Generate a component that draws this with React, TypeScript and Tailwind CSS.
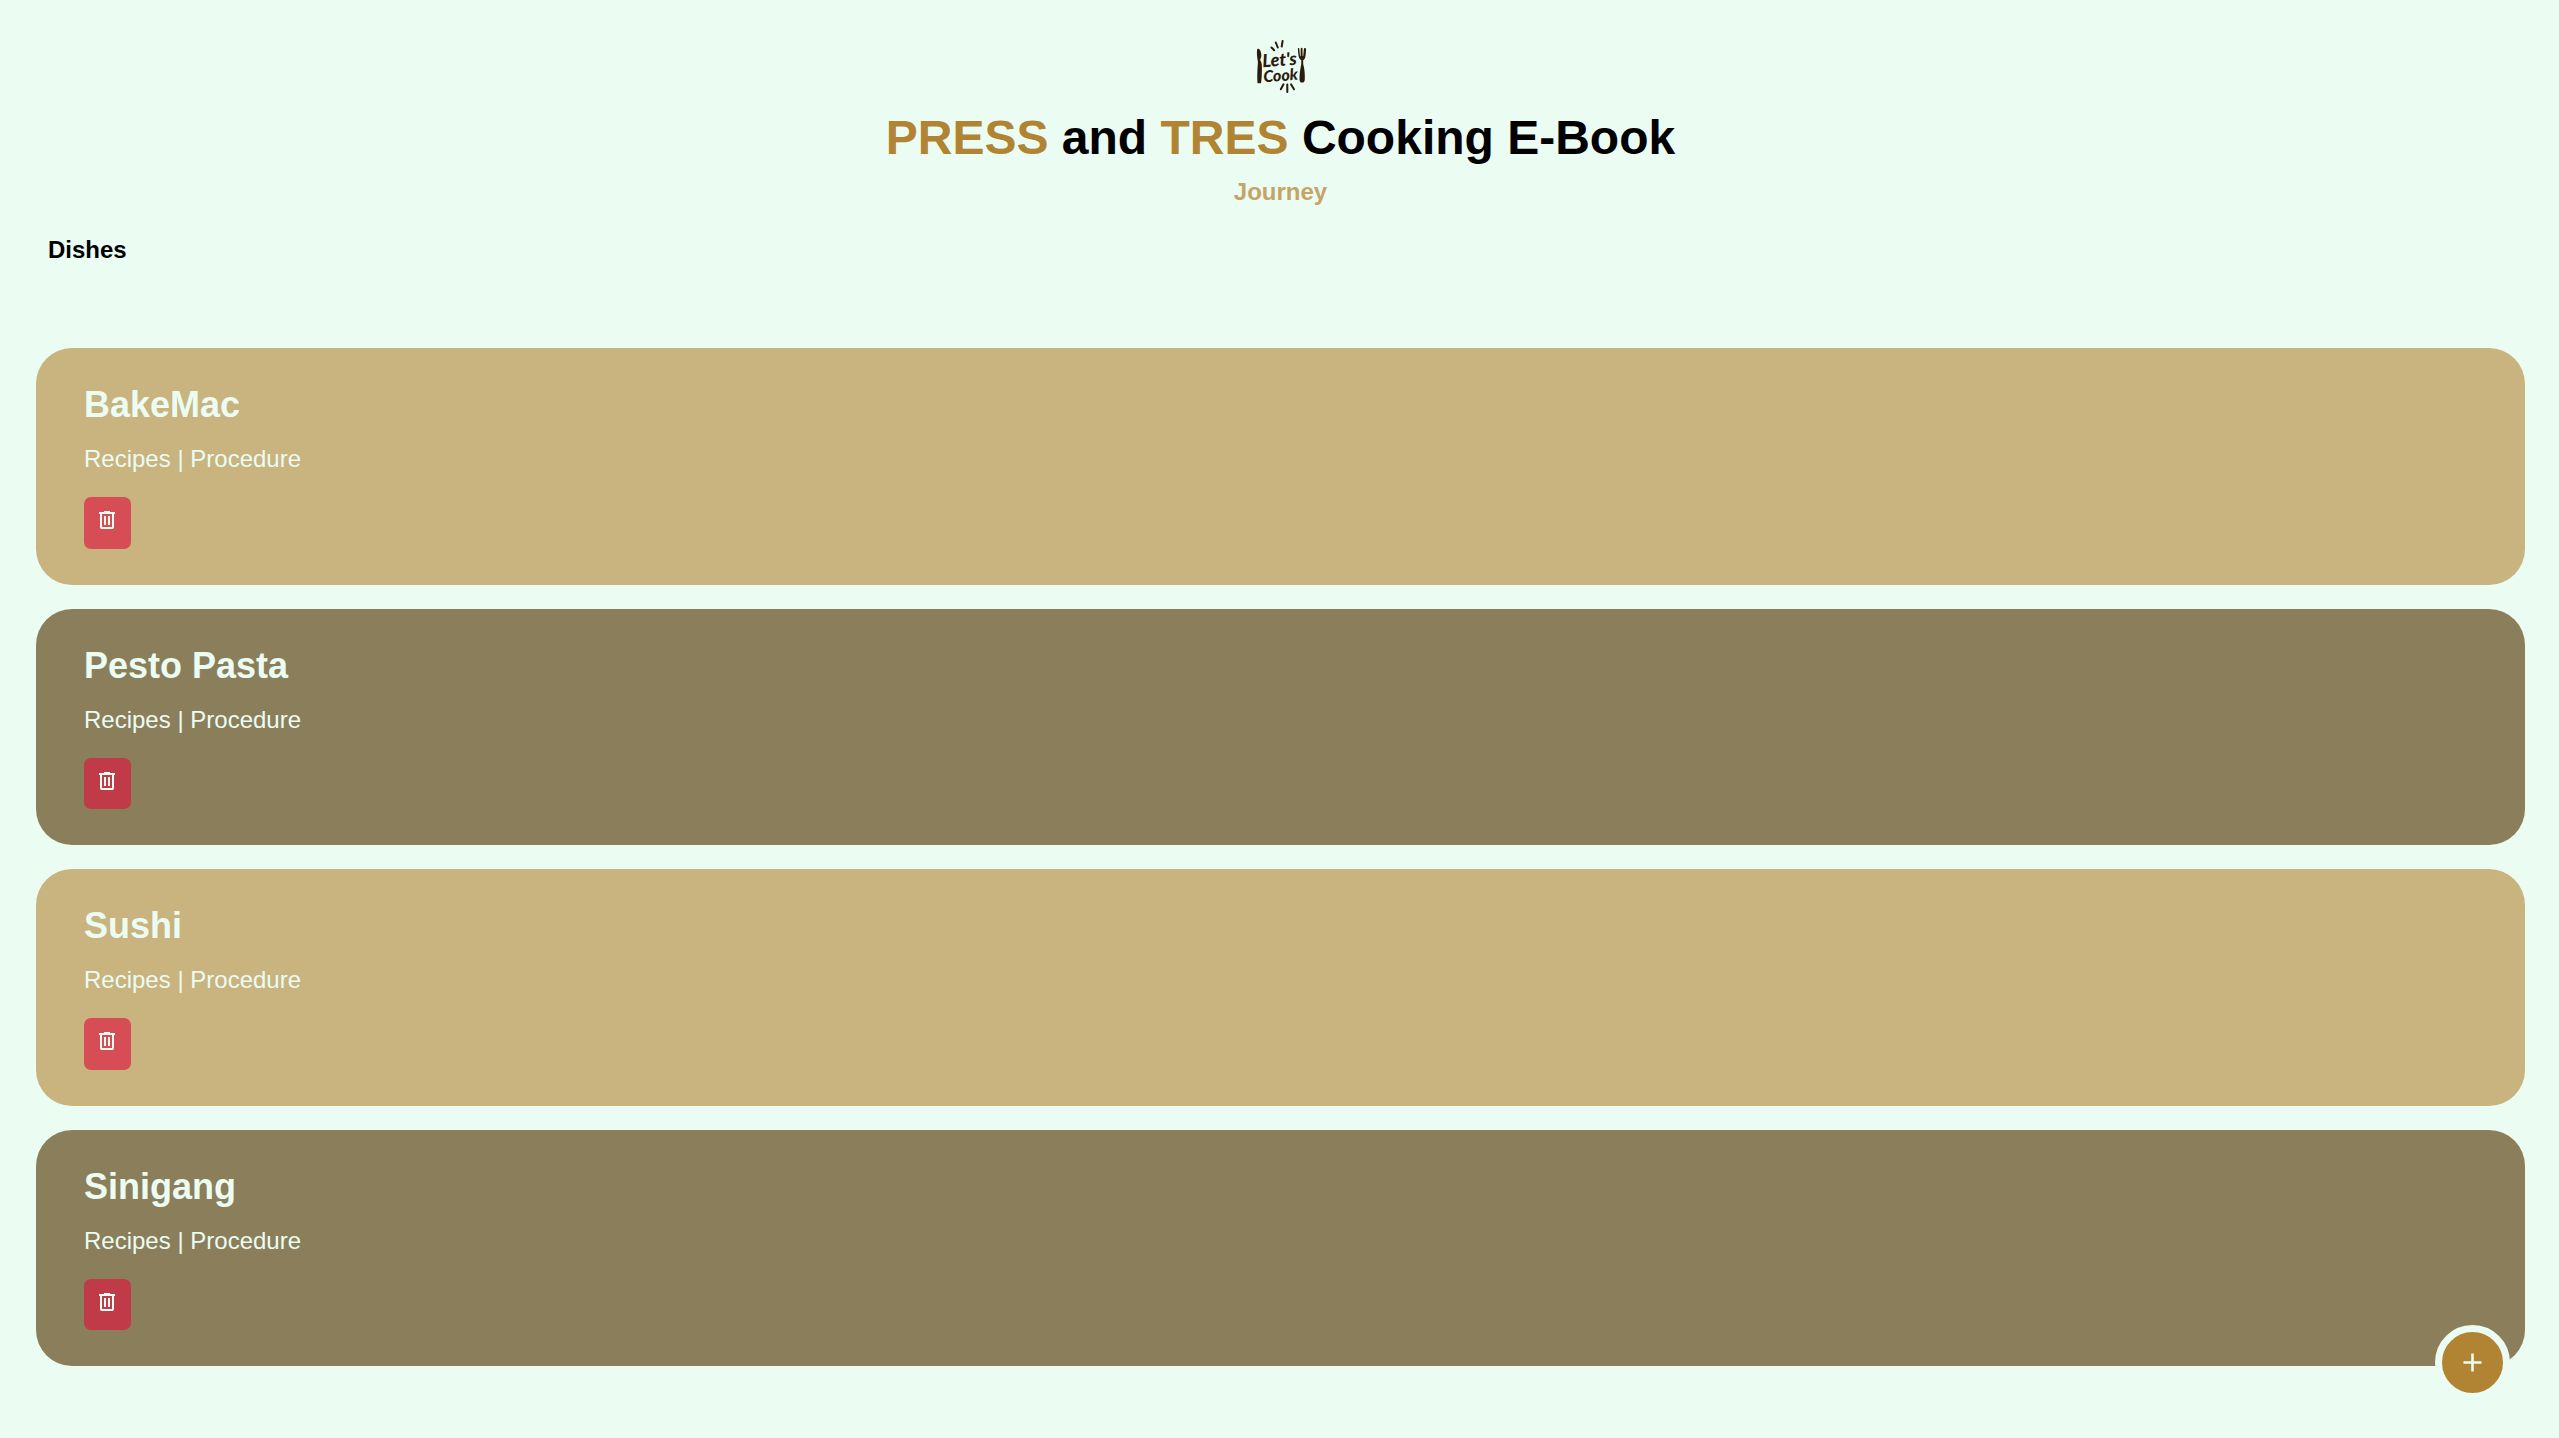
const dishes = [
  { name: 'BakeMac', light: true },
  { name: 'Pesto Pasta', light: false },
  { name: 'Sushi', light: true },
  { name: 'Sinigang', light: false },
];

function Logo() {
  return (
    <svg width="81" height="72" viewBox="0 0 81 72" role="img" aria-label="Let's Cook" fill="#2b1c0e">
      <path d="M17.300 19c1.600-.6 2.800.6 3.500 3 .7 2.500.9 5-.3 6.800-.5.8-.3 1.500.2 2.300 1.200 2 1.300 5 1.200 9-.1 4.500-.2 9-.8 12.400-.5 1.200-3.500 1.100-3.700-.1-.3-6 0-14 .5-19.500.100-2-.5-3.500-.7-5.500-.3-3-.5-6.500.1-8.400z" />
      <path d="M58.200 18c.800-.2 1 .3 1.100 1l.7 7 .6.300.1-8c.1-.9 1.700-.9 1.800 0l.1 8 .6-.3.700-7c.1-.8.600-1.200 1.300-.9.800.200.800.8.800 1.500-.1 3-.2 5.500-.7 7.500-.4 1.800-1.300 2.700-2.200 3.300l.2 4c1.200 4 1.700 9 1.500 14.500-.1 2.500-.8 3.700-2.600 3.700s-2.700-1.200-2.700-3.700c0-5 .7-10 1.700-14.500l.1-4.200c-1.300-.7-2.200-1.900-2.600-3.700-.5-2.500-.7-5-.8-7.500 0-.5 0-.9.300-1z" />
      <g stroke="#2b1c0e" strokeWidth="2" strokeLinecap="round" fill="none">
        <path d="M31.500 17.500l2.700 2.800M35.800 12.500l2 5M42.600 11l-.9 5.500" />
        <path d="M43.500 54.300l-2.700 5M47.300 54.500v7.500M51 54.300l3 5" />
      </g>
      <g
        fontFamily="Lato, 'Liberation Sans', sans-serif"
        fontStyle="italic"
        fontWeight="900"
        textAnchor="middle"
      >
        <text x="40" y="36" fontSize="18" transform="rotate(-4 40 36)">Let's</text>
        <text x="41" y="51" fontSize="16" transform="rotate(-4 41 51)">Cook</text>
      </g>
    </svg>
  );
}

function TrashIcon() {
  return (
    <svg width="24" height="24" viewBox="0 -960 960 960" fill="currentColor" aria-hidden="true">
      <path d="M280-120q-33 0-56.500-23.500T200-200v-520h-40v-80h200v-40h240v40h200v80h-40v520q0 33-23.500 56.500T680-120H280Zm400-600H280v520h400v-520ZM360-280h80v-360h-80v360Zm160 0h80v-360h-80v360Z" />
    </svg>
  );
}

function DishCard({ name, light }: { name: string; light: boolean }) {
  return (
    <article className={`rounded-[36px] px-12 py-9 ${light ? 'bg-[#c9b37e]' : 'bg-[#8b7f5b]'}`}>
      <h3 className="text-[36px] leading-[42px] font-bold">{name}</h3>
      <p className="mt-[15px] text-2xl leading-9">Recipes | Procedure</p>
      <button
        type="button"
        aria-label={`Delete ${name}`}
        className={`mt-5 flex w-[47px] rounded-[7px] pt-[11px] pl-[11px] ${light ? 'h-[52px] bg-[#d64d55]' : 'h-[51px] bg-[#c13a47]'}`}
      >
        <TrashIcon />
      </button>
    </article>
  );
}

export default function App() {
  return (
    <div className="min-h-screen bg-[#ebfcf2] pr-[34px] pb-[70px] pl-9 font-['Liberation_Sans',Arial,sans-serif] text-black">
      <header className="flex flex-col items-center pt-[30px]">
        <Logo />
        <h1 className="text-5xl leading-[72px] font-bold">
          <span className="text-[#b08432]">PRESS</span> and <span className="text-[#b08432]">TRES</span> Cooking E-Book
        </h1>
        <p className="text-2xl leading-9 font-bold text-[#c4a467]">Journey</p>
      </header>
      <main>
        <h2 className="mt-[22px] px-3 text-2xl leading-9 font-bold">Dishes</h2>
        <div className="mt-20 flex flex-col gap-6 text-[#ebfcf2]">
          {dishes.map((dish) => (
            <DishCard key={dish.name} {...dish} />
          ))}
        </div>
      </main>
      <button
        type="button"
        aria-label="Add dish"
        className="fixed right-[49px] bottom-[38px] flex size-[75px] items-center justify-center rounded-full border-[7px] border-[#ebfcf2] bg-[#b08432] text-[#ebfcf2]"
      >
        <svg width="31" height="31" viewBox="0 -960 960 960" fill="currentColor" aria-hidden="true">
          <path d="M440-440H200v-80h240v-240h80v240h240v80H520v240h-80v-240Z" />
        </svg>
      </button>
    </div>
  );
}
